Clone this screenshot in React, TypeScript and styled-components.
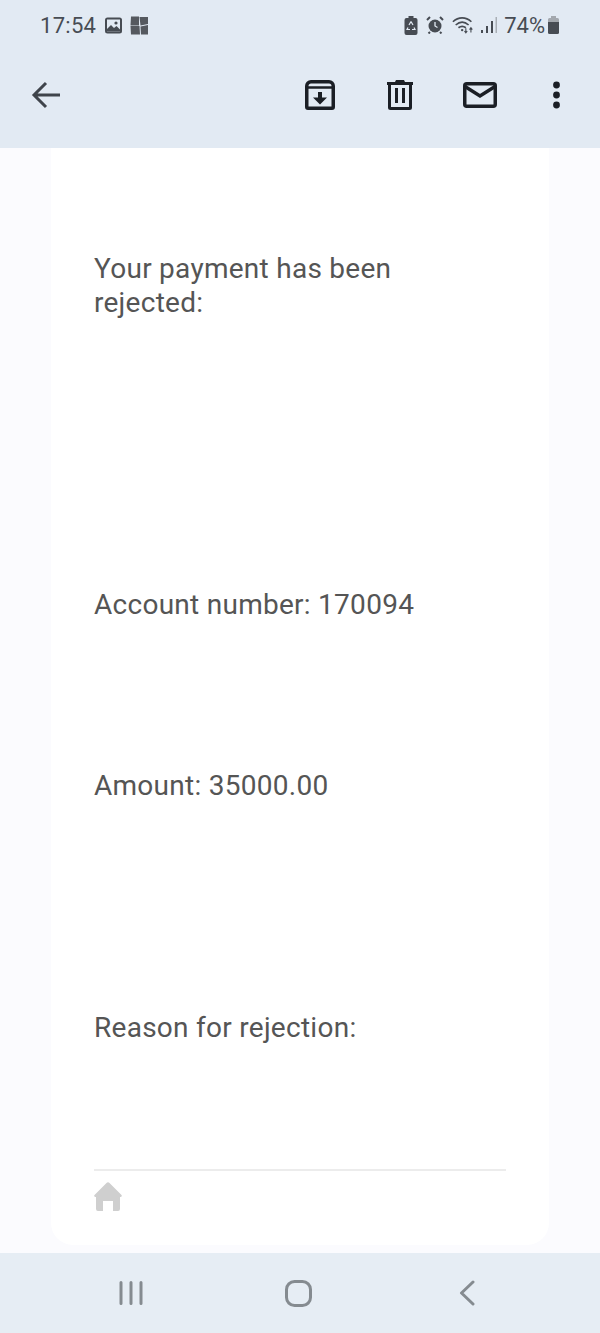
import React from "react";
import styled, { createGlobalStyle } from "styled-components";

const GlobalStyle = createGlobalStyle`
  html, body {
    margin: 0;
    padding: 0;
    background: #fbfbfe;
  }
`;

const Screen = styled.div`
  width: 600px;
  height: 1333px;
  display: flex;
  flex-direction: column;
  overflow: hidden;
  font-family: Roboto, "Liberation Sans", sans-serif;
`;

const Header = styled.header`
  height: 148px;
  flex: none;
  background: #e2eaf3;
  display: flex;
  flex-direction: column;
`;

const StatusBar = styled.div`
  height: 50px;
  padding: 0 40px;
  display: flex;
  align-items: center;
  color: #474c53;
  font-size: 22px;
`;

const StatusTime = styled.span`
  margin-right: 9px;
  letter-spacing: 0.3px;
`;

const StatusRight = styled.div`
  margin-left: auto;
  display: flex;
  align-items: center;
`;

const Percent = styled.span`
  margin-left: 6px;
`;

const Toolbar = styled.div`
  height: 90px;
  display: flex;
  align-items: center;
  padding-left: 26px;
`;

const ToolButton = styled.button<{ $left?: number }>`
  width: 40px;
  height: 40px;
  margin-left: ${({ $left }) => $left ?? 0}px;
  padding: 0;
  border: none;
  background: transparent;
  display: flex;
  align-items: center;
  justify-content: center;
`;

const Body = styled.main`
  flex: 1;
  background: #fbfbfe;
  padding: 0 51px 8px;
  display: flex;
`;

const Card = styled.section`
  flex: 1;
  background: #ffffff;
  border-radius: 0 0 22px 22px;
  padding: 104px 43px 0;
  display: flex;
  flex-direction: column;
`;

const Line = styled.p<{ $top: number }>`
  margin: ${({ $top }) => $top}px 0 0;
  font-size: 28px;
  letter-spacing: 0.27px;
  line-height: 34px;
  color: #555555;
  max-width: 340px;
`;

const Footer = styled.div`
  margin-top: 124px;
  border-top: 2px solid #ececec;
  padding-top: 11px;
`;

const HomeIcon = styled.svg`
  display: block;
  filter: blur(0.5px);
`;

const NavBar = styled.nav`
  height: 80px;
  flex: none;
  background: #e6edf4;
  display: grid;
  grid-template-columns: repeat(3, 167.5px);
  align-items: center;
  justify-items: center;
  padding-left: 47px;
`;

const Nav = styled.div`
  width: 60px;
  height: 40px;
  display: flex;
  align-items: center;
  justify-content: center;
`;

const App = () => (
  <>
    <GlobalStyle />
    <Screen>
      <Header>
        <StatusBar>
          <StatusTime>17:54</StatusTime>
          <svg width="17" height="17" viewBox="0 0 17 17">
            <rect width="17" height="16" y="0.5" rx="2.5" fill="#474c53" />
            <rect x="2" y="2.5" width="13" height="12" fill="#e2eaf3" />
            <path d="M2 12l4-4 3 3 2.5-2 3.5 3.5v2H2z" fill="#474c53" />
            <circle cx="11" cy="6" r="1.6" fill="#474c53" />
          </svg>
          <svg width="19" height="19" viewBox="0 0 19 19" style={{ marginLeft: 8 }}>
            <path d="M1 0.500h8v9H0.500zM9.500 1H18v7l-7.500 1.500zM0.500 10h9l0.500 8.500H1zM10.500 10.500L18 9v9.500h-7z" fill="#55595f" />
          </svg>
          <StatusRight>
            <svg width="14" height="20" viewBox="0 0 14 20">
              <path d="M4.500 1h5v2H12a2 2 0 0 1 1.500 2v13a2 2 0 0 1-2 2h-9a2 2 0 0 1-2-2V5a2 2 0 0 1 2-2h2z" fill="#474c53" />
              <path d="M7 6.500l2 3.500M7 6.500L5 10M4 12.500l-1 2h3M10 12.500l1 2H8" stroke="#e2eaf3" strokeWidth="1.200" fill="none" />
            </svg>
            <svg width="18" height="18" viewBox="0 0 18 18" style={{ marginLeft: 8 }}>
              <circle cx="9" cy="10" r="6.500" fill="#474c53" />
              <path d="M9 6v4l2.500 1.500" stroke="#e2eaf3" strokeWidth="1.300" fill="none" />
              <path d="M1 4l3-3M17 4l-3-3M4 16l-1.500 1.500M14 16l1.500 1.500" stroke="#474c53" strokeWidth="2" />
            </svg>
            <svg width="24" height="20" viewBox="0 0 26 20" style={{ marginLeft: 8 }}>
              <path d="M1 6.500C7 .8 15 .8 21 6.500M4 10c4.500-4 9.500-4 14 0M7 13c2.500-2 5.500-2 8 0" stroke="#474c53" strokeWidth="1.800" fill="none" />
              <circle cx="11" cy="15.500" r="1.300" fill="#474c53" />
              <path d="M15 13.500v5M13.500 16.500l1.500 2 1.500-2M20.500 18v-5M19 15l1.500-2 1.500 2" stroke="#474c53" strokeWidth="1.200" fill="none" />
            </svg>
            <svg width="18" height="20" viewBox="0 0 18 20" style={{ marginLeft: 4 }}>
              <rect x="1" y="15" width="2" height="3" fill="#474c53" />
              <rect x="6" y="11" width="2" height="7" fill="#474c53" />
              <rect x="11" y="6" width="2" height="12" fill="#474c53" />
              <rect x="15.500" y="2" width="1.500" height="16" fill="#a9afb6" />
            </svg>
            <Percent>74%</Percent>
            <svg width="11" height="18" viewBox="0 0 11 18" style={{ marginLeft: 3, marginRight: 1 }}>
              <path d="M3 0h5v2h1.500A1.500 1.500 0 0 1 11 3.500V6H0V3.500A1.500 1.500 0 0 1 1.500 2H3z" fill="#a3a8ae" />
              <path d="M0 6h11v10.500a1.500 1.500 0 0 1-1.500 1.500h-8A1.500 1.500 0 0 1 0 16.500z" fill="#474c53" />
            </svg>
          </StatusRight>
        </StatusBar>
        <Toolbar>
          <ToolButton aria-label="Back">
            <svg width="30" height="28" viewBox="0 0 30 28">
              <path d="M29 14H4M15 2L3 14l12 12" stroke="#3f444b" strokeWidth="3" fill="none" />
            </svg>
          </ToolButton>
          <ToolButton aria-label="Archive" $left={234}>
            <svg width="30" height="30" viewBox="0 0 30 30">
              <path d="M6 1.750h18a4.250 4.250 0 0 1 4.250 4.250v21a1.250 1.250 0 0 1-1.250 1.250H3A1.250 1.250 0 0 1 1.750 27V6A4.250 4.250 0 0 1 6 1.750z" stroke="#1b1f25" strokeWidth="3.500" fill="none" strokeLinejoin="round" />
              <path d="M2 7.500h26" stroke="#1b1f25" strokeWidth="2.500" />
              <path d="M13 12h4v5.500h5l-7 7-7-7h5z" fill="#1b1f25" />
            </svg>
          </ToolButton>
          <ToolButton aria-label="Delete" $left={40}>
            <svg width="26" height="30" viewBox="0 0 26 30">
              <path d="M2.500 4v23.500a1 1 0 0 0 1 1h19a1 1 0 0 0 1-1V4" stroke="#1b1f25" strokeWidth="3" fill="none" />
              <path d="M0 2h8l1-2h8l1 2h8v3H0z" fill="#1b1f25" />
              <rect x="8" y="8" width="3" height="15" fill="#1b1f25" />
              <rect x="15" y="8" width="3" height="15" fill="#1b1f25" />
            </svg>
          </ToolButton>
          <ToolButton aria-label="Mail" $left={40}>
            <svg width="34" height="26" viewBox="0 0 34 26">
              <rect x="1.750" y="1.750" width="30.500" height="22.500" rx="2" stroke="#1b1f25" strokeWidth="3.500" fill="none" />
              <path d="M2 4.500l15 9.500L32 4.500" stroke="#1b1f25" strokeWidth="3.500" fill="none" />
            </svg>
          </ToolButton>
          <ToolButton aria-label="More" $left={36}>
            <svg width="8" height="28" viewBox="0 0 8 28">
              <circle cx="4.500" cy="4" r="3.400" fill="#1b1f25" />
              <circle cx="4.500" cy="14" r="3.400" fill="#1b1f25" />
              <circle cx="4.500" cy="24" r="3.400" fill="#1b1f25" />
            </svg>
          </ToolButton>
        </Toolbar>
      </Header>
      <Body>
        <Card>
          <Line $top={0}>Your payment has been rejected:</Line>
          <Line $top={268}>Account number: 170094</Line>
          <Line $top={147}>Amount: 35000.00</Line>
          <Line $top={208}>Reason for rejection:</Line>
          <Footer>
            <HomeIcon width="28" height="29" viewBox="0 0 28 29">
              <path d="M12.500 1a2 2 0 0 1 3 0L27.500 13a1.200 1.200 0 0 1-1 2H26v12a2 2 0 0 1-2 2h-5V19H9v10H4a2 2 0 0 1-2-2V15h-.5a1.200 1.200 0 0 1-1-2z" fill="#cfcfcf" />
            </HomeIcon>
          </Footer>
        </Card>
      </Body>
      <NavBar>
        <Nav>
          <svg width="24" height="24" viewBox="0 0 24 24">
            <path d="M2 1.500v21M12 1.500v21M22 1.500v21" stroke="#858b90" strokeWidth="3" strokeLinecap="round" />
          </svg>
        </Nav>
        <Nav>
          <svg width="27" height="27" viewBox="0 0 27 27">
            <rect x="1.500" y="1.500" width="24" height="24" rx="8" stroke="#858b90" strokeWidth="3" fill="none" />
          </svg>
        </Nav>
        <Nav>
          <svg width="16" height="26" viewBox="0 0 16 26" style={{ marginRight: -2 }}>
            <path d="M14 2L2.500 13 14 24" stroke="#858b90" strokeWidth="3" strokeLinecap="round" strokeLinejoin="round" fill="none" />
          </svg>
        </Nav>
      </NavBar>
    </Screen>
  </>
);

export default App;
